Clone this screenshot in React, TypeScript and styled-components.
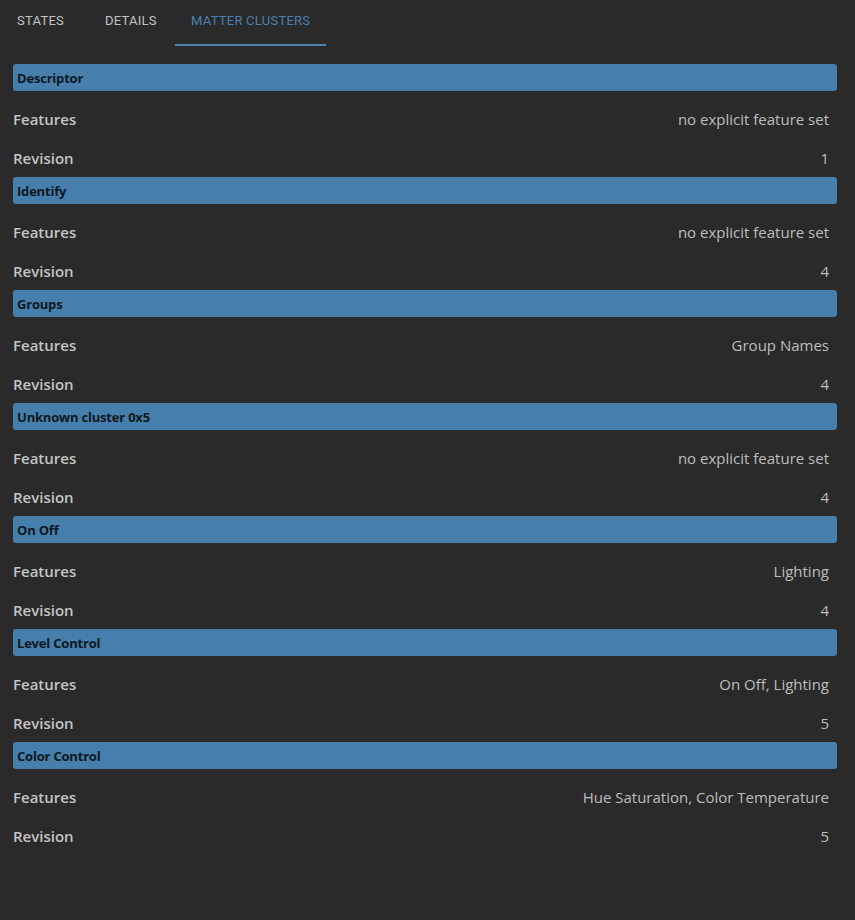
import React, { ReactElement } from "react"
import styled, { createGlobalStyle } from "styled-components"

interface Cluster {
	name: string
	features: string
	revision: number
}

const clusters: Cluster[] = [
	{ name: "Descriptor", features: "no explicit feature set", revision: 1 },
	{ name: "Identify", features: "no explicit feature set", revision: 4 },
	{ name: "Groups", features: "Group Names", revision: 4 },
	{ name: "Unknown cluster 0x5", features: "no explicit feature set", revision: 4 },
	{ name: "On Off", features: "Lighting", revision: 4 },
	{ name: "Level Control", features: "On Off, Lighting", revision: 5 },
	{ name: "Color Control", features: "Hue Saturation, Color Temperature", revision: 5 },
]

const GlobalStyle = createGlobalStyle`
	html, body {
		margin: 0;
		background-color: #2a2a2a;
	}
	body {
		font-family: "Open Sans", "Noto Sans", sans-serif;
	}
`

const Page = styled.div`
	min-height: 920px;
	background-color: #2a2a2a;
	padding: 0 18px 0 13px;
`

const TabBar = styled.div`
	display: flex;
	height: 46px;
	margin-left: -13px;
	margin-bottom: 18px;
`

const Tab = styled.div<{ $active?: boolean; $width: number; $inset: number }>`
	width: ${(p): number => p.$width}px;
	display: flex;
	align-items: center;
	box-sizing: border-box;
	padding: 0 0 4px ${(p): number => p.$inset}px;
	font-family: "Roboto", "Liberation Sans", sans-serif;
	font-size: 13px;
	letter-spacing: 0.25px;
	color: ${(p): string => (p.$active ? "#4a80ad" : "#c4c4c4")};
	border-bottom: 2px solid ${(p): string => (p.$active ? "#4a80ad" : "transparent")};
`

const Section = styled.section`
	display: flex;
	flex-direction: column;
`

const Header = styled.div`
	height: 27px;
	box-sizing: border-box;
	display: flex;
	align-items: center;
	padding: 0 4px;
	margin-bottom: 8px;
	background-color: #467fab;
	border-radius: 3px;
	font-size: 13px;
	font-weight: 700;
	letter-spacing: -0.2px;
	color: #0d1822;
`

const Row = styled.div`
	height: 39px;
	display: flex;
	align-items: center;
	justify-content: space-between;
	padding-right: 8px;
	font-size: 15px;
`

const Label = styled.span`
	font-weight: 600;
	color: #c4c4c4;
`

const Value = styled.span`
	color: #bdbdbd;
`

const ClusterBlock = ({ cluster }: { cluster: Cluster }): ReactElement => (
	<Section>
		<Header>{cluster.name}</Header>
		<Row>
			<Label>Features</Label>
			<Value>{cluster.features}</Value>
		</Row>
		<Row>
			<Label>Revision</Label>
			<Value>{cluster.revision}</Value>
		</Row>
	</Section>
)

const App = (): ReactElement => (
	<>
		<GlobalStyle />
		<Page>
			<TabBar>
				<Tab $width={88} $inset={17}>
					STATES
				</Tab>
				<Tab $width={87} $inset={17}>
					DETAILS
				</Tab>
				<Tab $width={151} $inset={16} $active>
					MATTER CLUSTERS
				</Tab>
			</TabBar>
			{clusters.map((c) => (
				<ClusterBlock key={c.name} cluster={c} />
			))}
		</Page>
	</>
)

export default App
